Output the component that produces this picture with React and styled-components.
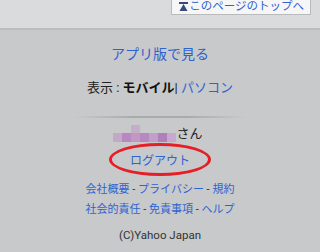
import styled, { createGlobalStyle } from "styled-components";

const GlobalStyle = createGlobalStyle`
  body {
    margin: 0;
    background: #c8c9ca;
    font-family: Roboto, "Noto Sans CJK JP", sans-serif;
  }
`;

const Page = styled.div`
  width: 320px;
  height: 252px;
  overflow: hidden;
  background: #c8c9ca;
`;

const TopBar = styled.div`
  height: 28px;
  background: #dadbdc;
  border-bottom: 2px solid #bcbdbe;
  display: flex;
  justify-content: flex-end;
  padding-right: 9px;
`;

const TopButton = styled.a`
  display: flex;
  align-items: center;
  gap: 1px;
  height: 15px;
  padding: 0 6px 0 7px;
  background: #f6f6f7;
  border: 1px solid #b9babb;
  border-top: none;
  color: #2f62d2;
  font-size: 11.5px;
  line-height: 15px;
  text-decoration: none;
  margin-top: -1px;
`;

const Main = styled.div`
  display: flex;
  flex-direction: column;
  align-items: center;
`;

const AppLink = styled.a`
  margin-top: 14px;
  color: #2f62d2;
  font-size: 14px;
  line-height: 20px;
  text-decoration: none;
`;

const ViewRow = styled.div`
  margin-top: 14px;
  font-size: 13px;
  line-height: 20px;
  color: #222;
`;

const Bold = styled.b`
  color: #111;
`;

const Blue = styled.a`
  color: #2f62d2;
  text-decoration: none;
`;

const Divider = styled.div`
  margin-top: 18px;
  width: 172px;
  height: 2px;
  background: linear-gradient(to right, rgba(160,160,160,0), #a9aaaa 35%, #a9aaaa 65%, rgba(160,160,160,0));
`;

const UserRow = styled.div`
  margin-top: 7px;
  display: flex;
  align-items: flex-end;
  margin-left: -4px;
`;

const Mosaic = styled.div`
  display: grid;
  grid-template-columns: repeat(7, 9px);
  grid-template-rows: 8px 9px;
`;

const Cell = styled.div`
  background: ${(p) => p.$c};
`;

const San = styled.span`
  font-size: 13px;
  line-height: 16px;
  color: #222;
`;

const LogoutRing = styled.div`
  margin-top: 1px;
  width: 96px;
  height: 27px;
  border: 3px solid #e61e28;
  border-radius: 50%;
  display: flex;
  align-items: center;
  justify-content: center;
`;

const Logout = styled.a`
  color: #2f62d2;
  font-size: 12px;
  text-decoration: none;
`;

const Links = styled.div`
  margin-top: 4px;
  font-size: 11px;
  line-height: 20px;
  text-align: center;
  color: #333;
`;

const Copy = styled.div`
  margin-top: 7px;
  font-size: 11.5px;
  line-height: 17px;
  color: #333;
`;

const mosaic = [
  null, null, "#c4aec8", null, null, null, null,
  "#c4a8c8", "#b888c0", "#c098c4", "#b888c0", "#c0a0c8", "#b080b8", "#c8a8cc",
];

const TopIcon = () => (
  <svg width="9" height="9" viewBox="0 0 9 9">
    <rect x="0" y="0" width="9" height="2" fill="#3a4a78" />
    <path d="M4.5 2 L8.5 9 L0.5 9 Z" fill="#3a4a78" />
  </svg>
);

const Sep = () => <span> - </span>;

export default function App() {
  return (
    <Page>
      <GlobalStyle />
      <TopBar>
        <TopButton>
          <TopIcon />
          このページのトップへ
        </TopButton>
      </TopBar>
      <Main>
        <AppLink>アプリ版で見る</AppLink>
        <ViewRow>
          表示 : <Bold>モバイル</Bold>| <Blue>パソコン</Blue>
        </ViewRow>
        <Divider />
        <UserRow>
          <Mosaic>
            {mosaic.map((c, i) => (
              <Cell key={i} $c={c || "transparent"} />
            ))}
          </Mosaic>
          <San>さん</San>
        </UserRow>
        <LogoutRing>
          <Logout>ログアウト</Logout>
        </LogoutRing>
        <Links>
          <Blue>会社概要</Blue>
          <Sep />
          <Blue>プライバシー</Blue>
          <Sep />
          <Blue>規約</Blue>
          <br />
          <Blue>社会的責任</Blue>
          <Sep />
          <Blue>免責事項</Blue>
          <Sep />
          <Blue>ヘルプ</Blue>
        </Links>
        <Copy>(C)Yahoo Japan</Copy>
      </Main>
    </Page>
  );
}
